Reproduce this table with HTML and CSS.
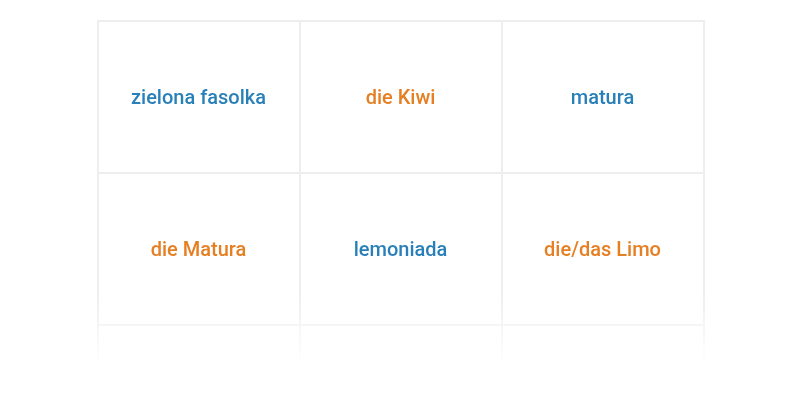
FILE: index.html
```html
<!DOCTYPE html>
<html>
<head>
<meta charset="utf-8">
<link rel="stylesheet" href="styles.css">
</head>
<body>
<div class="page">
  <div class="fade">
    <div class="grid">
      <div class="cell blue">zielona fasolka</div>
      <div class="cell orange">die Kiwi</div>
      <div class="cell blue">matura</div>
      <div class="cell orange">die Matura</div>
      <div class="cell blue">lemoniada</div>
      <div class="cell orange">die/das Limo</div>
      <div class="cell"></div>
      <div class="cell"></div>
      <div class="cell"></div>
    </div>
  </div>
</div>
</body>
</html>
```

FILE: styles.css
```css
html, body {
  margin: 0;
  padding: 0;
  background: #fff;
}
body {
  font-family: Roboto, "Liberation Sans", sans-serif;
}
.page {
  padding-top: 20px;
  padding-left: 1px;
  display: flex;
  justify-content: center;
}
.fade {
  height: 345px;
  overflow: hidden;
  -webkit-mask-image: linear-gradient(to bottom, #000 80%, transparent 100%);
  mask-image: linear-gradient(to bottom, #000 80%, transparent 100%);
}
.grid {
  width: 606px;
  display: grid;
  grid-template-columns: repeat(3, 202px);
  grid-auto-rows: 152px;
  border-left: 2px solid #eeeeee;
  border-top: 2px solid #eeeeee;
}
.cell {
  border-right: 2px solid #eeeeee;
  border-bottom: 2px solid #eeeeee;
  display: flex;
  align-items: center;
  justify-content: center;
  font-size: 20px;
  font-weight: 500;
}
.blue { color: #2980b9; }
.orange { color: #e67e22; }
```
